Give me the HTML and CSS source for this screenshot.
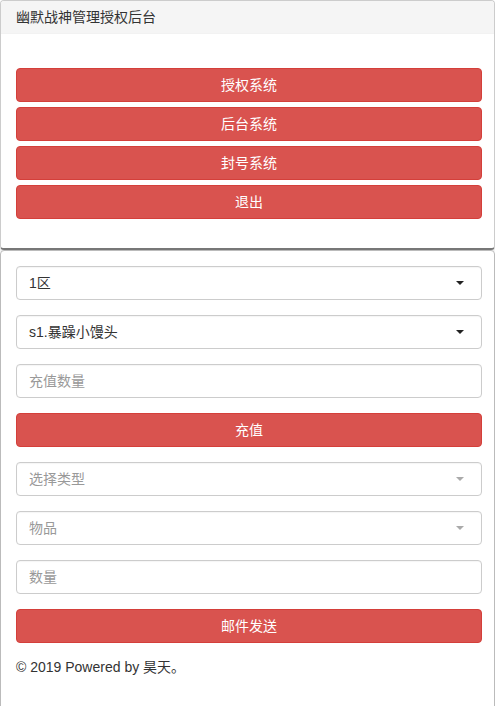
FILE: index.html
```html
<!DOCTYPE html>
<html>
<head>
<meta charset="utf-8">
<link rel="stylesheet" href="styles.css">
</head>
<body>
<div class="panel panel-top">
  <div class="panel-heading">幽默战神管理授权后台</div>
  <div class="panel-body menu">
    <button class="btn">授权系统</button>
    <button class="btn">后台系统</button>
    <button class="btn">封号系统</button>
    <button class="btn">退出</button>
  </div>
</div>
<div class="panel panel-main">
  <div class="panel-body form">
    <div class="field select"><span>1区</span><i class="caret"></i></div>
    <div class="field select"><span>s1.暴躁小馒头</span><i class="caret"></i></div>
    <div class="field placeholder"><span>充值数量</span></div>
    <button class="btn">充值</button>
    <div class="field select placeholder"><span>选择类型</span><i class="caret light"></i></div>
    <div class="field select placeholder"><span>物品</span><i class="caret light"></i></div>
    <div class="field placeholder"><span>数量</span></div>
    <button class="btn">邮件发送</button>
    <p class="footer">© 2019 Powered by 昊天。</p>
  </div>
</div>
</body>
</html>
```
FILE: styles.css
```css
* { box-sizing: border-box; }
html, body { margin: 0; padding: 0; background: #fff; }
body {
  font-family: "Liberation Sans", "Noto Sans CJK SC", sans-serif;
  font-size: 14px;
  line-height: 20px;
  color: #333;
  width: 495px;
  height: 706px;
  overflow: hidden;
}
.panel {
  border: 1px solid #ccc;
  border-radius: 4px;
  background: #fff;
}
.panel-top {
  height: 250px;
  border-bottom: 2px solid #777;
  box-shadow: 0 2px 3px rgba(0,0,0,0.1);
}
.panel-heading {
  background: #f5f5f5;
  height: 33px;
  padding: 6px 15px;
  border-bottom: 1px solid #f2f2f2;
  border-radius: 3px 3px 0 0;
  font-size: 14px;
}
.panel-body {
  padding: 15px 12px 15px 15px;
}
.menu {
  padding-top: 34px;
  display: flex;
  flex-direction: column;
  gap: 5px;
}
.panel-main {
  height: 470px;
  border-color: #bbb;
}
.form {
  display: flex;
  flex-direction: column;
  gap: 15px;
}
.btn {
  display: block;
  width: 100%;
  height: 34px;
  background: #d9534f;
  border: 1px solid #d43f3a;
  border-radius: 4px;
  color: #fff;
  font-family: inherit;
  font-size: 14px;
  line-height: 20px;
  padding: 6px 12px;
  text-align: center;
}
.field {
  height: 34px;
  border: 1px solid #ccc;
  border-radius: 4px;
  padding: 6px 12px;
  display: flex;
  align-items: center;
  justify-content: space-between;
  color: #333;
  box-shadow: inset 0 1px 1px rgba(0,0,0,0.04);
}
.field.placeholder { color: #999; }
.caret {
  width: 0;
  height: 0;
  border-left: 4px solid transparent;
  border-right: 4px solid transparent;
  border-top: 4px solid #222;
  margin-right: 5px;
}
.caret.light { border-top-color: #aaa; }
.footer {
  margin: -1px 0 0;
  font-size: 14px;
  color: #333;
}
```
